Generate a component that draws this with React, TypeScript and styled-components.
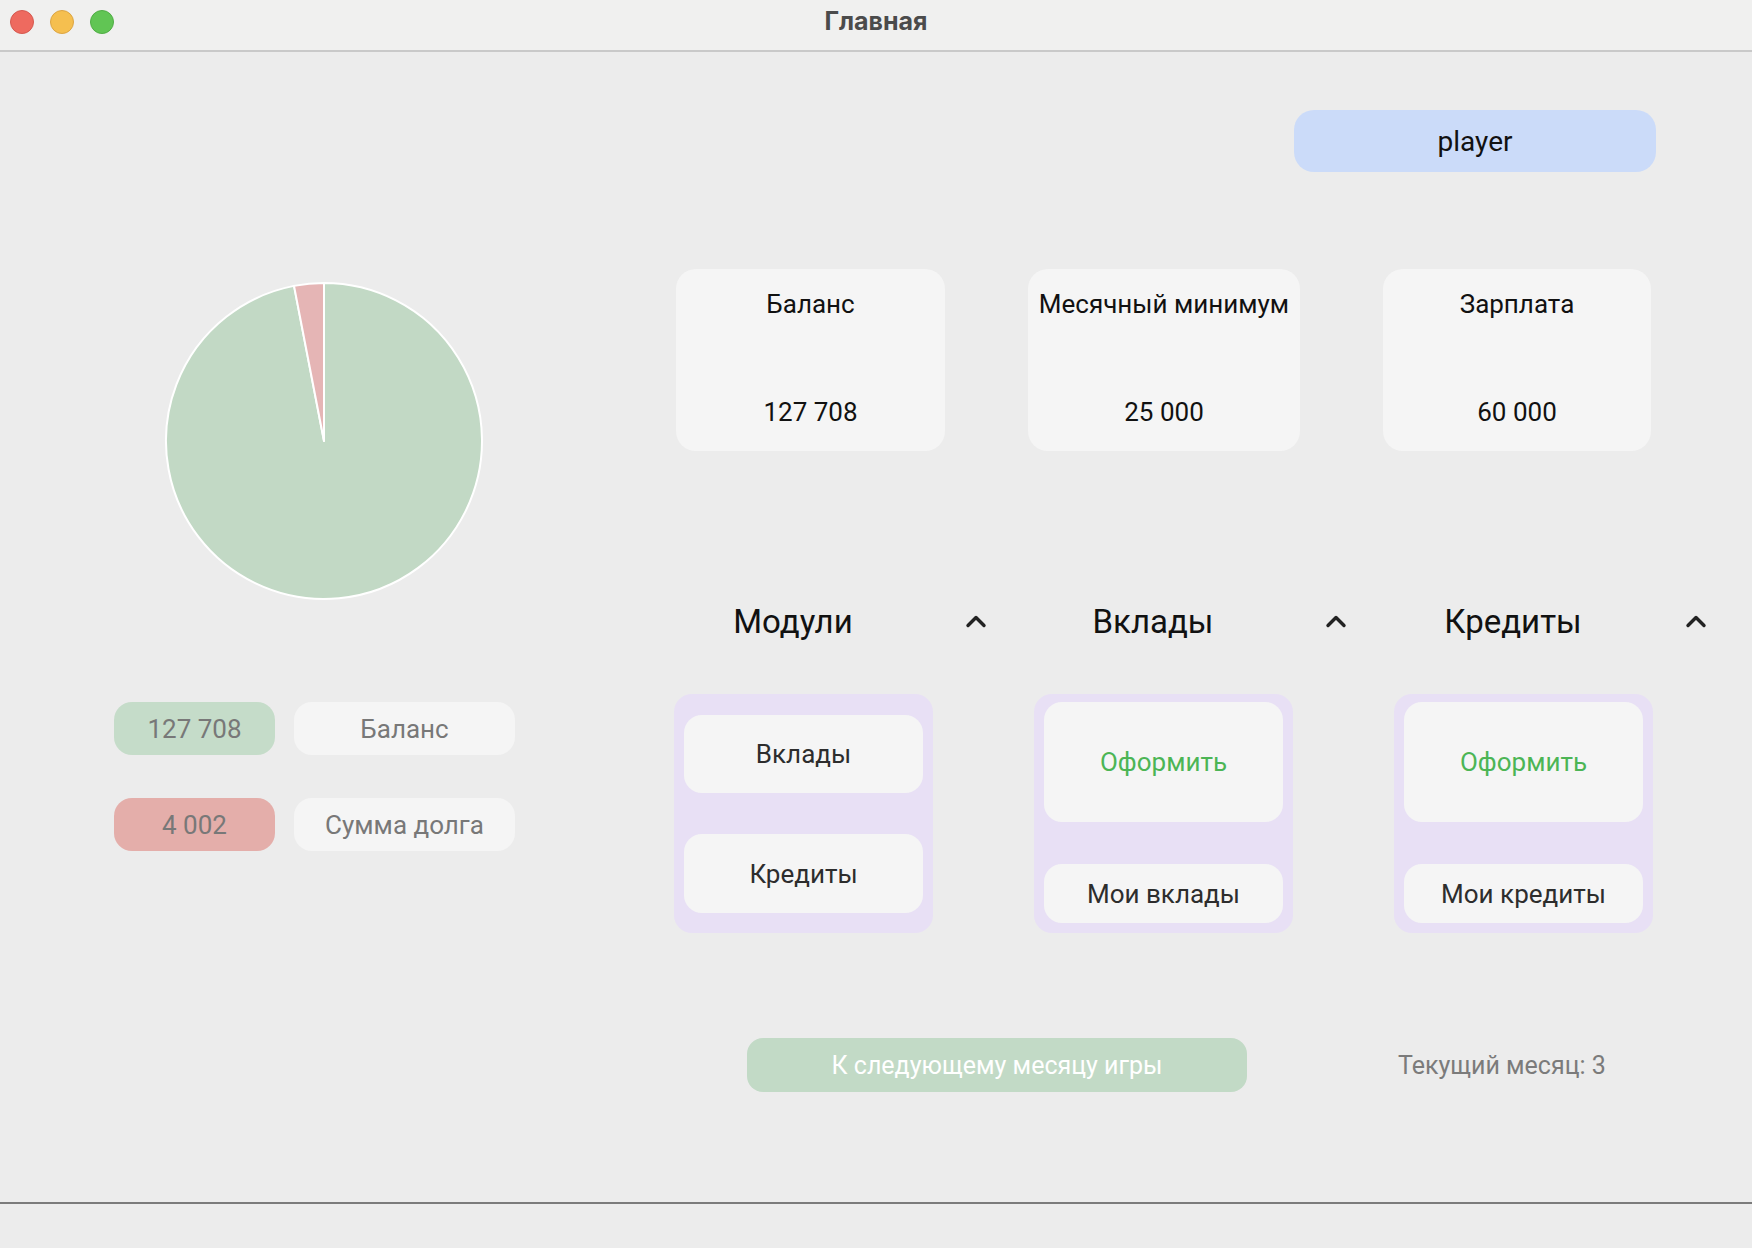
import React from "react";
import styled, { createGlobalStyle } from "styled-components";

const FONT = `"Roboto", "Noto Sans", "DejaVu Sans", sans-serif`;

const GlobalStyle = createGlobalStyle`
  html, body { margin: 0; padding: 0; background: #ececec; }
  body { font-family: ${FONT}; }
  * { box-sizing: border-box; }
`;

const Window = styled.div`
  width: 1752px;
  height: 1248px;
  display: flex;
  flex-direction: column;
  background: #ececec;
  overflow: hidden;
`;

const TitleBar = styled.div`
  height: 52px;
  flex: none;
  display: flex;
  align-items: flex-start;
  position: relative;
  background: #f0f0ef;
  border-bottom: 2px solid #c9c9c9;
  padding: 10px 0 0 10px;
`;

const Lights = styled.div`
  display: flex;
  gap: 16px;
`;

const Light = styled.span<{ $c: string; $b: string }>`
  width: 24px;
  height: 24px;
  border-radius: 50%;
  background: ${(p) => p.$c};
  border: 1px solid ${(p) => p.$b};
`;

const Title = styled.div`
  position: absolute;
  left: 0;
  right: 0;
  top: 0;
  height: 42px;
  display: flex;
  align-items: center;
  justify-content: center;
  font-family: "Inter", "Noto Sans", sans-serif;
  font-weight: 700;
  font-size: 25px;
  color: #4b4b4b;
  pointer-events: none;
`;

const Main = styled.div`
  flex: 1;
  display: flex;
`;

const Footer = styled.div`
  height: 46px;
  flex: none;
  border-top: 2px solid #7b7b7b;
  background: #ececec;
`;

/* ---------- left column ---------- */

const LeftColumn = styled.div`
  width: 674px;
  flex: none;
  display: flex;
  flex-direction: column;
  padding: 229px 0 0 114px;
`;

const PieWrap = styled.div`
  margin-left: 50px;
  width: 320px;
  height: 320px;
  margin-bottom: 101px;
`;

const Legend = styled.div`
  display: flex;
  flex-direction: column;
  gap: 43px;
`;

const LegendRow = styled.div`
  display: flex;
  gap: 19px;
`;

const Pill = styled.div<{ $bg: string; $w: number }>`
  width: ${(p) => p.$w}px;
  height: 53px;
  border-radius: 18px;
  background: ${(p) => p.$bg};
  display: flex;
  align-items: center;
  justify-content: center;
  font-size: 26px;
  color: #787878;
`;

/* ---------- right column ---------- */

const RightColumn = styled.div`
  flex: 1;
  display: flex;
  flex-direction: column;
  padding: 58px 0 0 0;
`;

const PlayerRow = styled.div`
  display: flex;
  justify-content: flex-end;
  padding-right: 96px;
`;

const PlayerButton = styled.div`
  width: 362px;
  height: 62px;
  border-radius: 20px;
  background: #cbdbf9;
  display: flex;
  align-items: center;
  justify-content: center;
  font-size: 28px;
  color: #111;
`;

const Cards = styled.div`
  margin: 97px 0 0 2px;
  display: grid;
  grid-template-columns: 269px 272px 268px;
  column-gap: 83px;
`;

const Card = styled.div`
  height: 182px;
  border-radius: 20px;
  background: #f5f5f5;
  display: flex;
  flex-direction: column;
  align-items: center;
  justify-content: space-between;
  padding: 20px 0 24px;
  color: #111;
  font-size: 26px;
`;

const Sections = styled.div`
  margin-top: 148px;
  display: grid;
  grid-template-columns: repeat(3, 259px);
  column-gap: 101px;
`;

const Section = styled.div`
  display: flex;
  flex-direction: column;
`;

const SectionHeader = styled.div`
  height: 44px;
  display: flex;
  align-items: center;
  margin-bottom: 51px;
  white-space: nowrap;
`;

const SectionTitle = styled.div`
  flex: none;
  width: 238px;
  text-align: center;
  font-size: 33px;
  color: #111;
`;

const Chevron = styled.svg`
  margin-left: 53px;
  flex: none;
`;

const Panel = styled.div<{ $pt: number; $gap: number }>`
  height: 239px;
  border-radius: 18px;
  background: #e8e0f5;
  display: flex;
  flex-direction: column;
  gap: ${(p) => p.$gap}px;
  padding: ${(p) => p.$pt}px 10px 10px;
`;

const PanelButton = styled.div<{ $h: number; $green?: boolean }>`
  height: ${(p) => p.$h}px;
  flex: none;
  border-radius: 18px;
  background: #f5f5f5;
  display: flex;
  align-items: center;
  justify-content: center;
  font-size: 26px;
  color: ${(p) => (p.$green ? "#4cb555" : "#2d2d2d")};
`;

const BottomRow = styled.div`
  margin-top: 105px;
  display: flex;
  align-items: center;
  padding-left: 73px;
  gap: 151px;
`;

const NextButton = styled.div`
  width: 500px;
  height: 54px;
  border-radius: 16px;
  background: #c2dac6;
  display: flex;
  align-items: center;
  justify-content: center;
  color: #ffffff;
  font-size: 25px;
`;

const MonthLabel = styled.div`
  font-size: 25px;
  color: #7b7b7b;
`;

/* ---------- components ---------- */

const balance = 127708;
const debt = 4002;

function PieChart() {
  const cx = 160;
  const cy = 160;
  const r = 158;
  const frac = debt / (balance + debt);
  const ang = frac * 2 * Math.PI;
  const x = cx - r * Math.sin(ang);
  const y = cy - r * Math.cos(ang);
  return (
    <svg width="320" height="320" viewBox="0 0 320 320">
      <path
        d={`M${cx},${cy} L${x},${y} A${r},${r} 0 1 0 ${cx},${cy - r} Z`}
        fill="#c2d9c5"
        stroke="#ffffff"
        strokeWidth="2"
        strokeLinejoin="round"
      />
      <path
        d={`M${cx},${cy} L${cx},${cy - r} A${r},${r} 0 0 0 ${x},${y} Z`}
        fill="#e5b5b5"
        stroke="#ffffff"
        strokeWidth="2"
        strokeLinejoin="round"
      />
    </svg>
  );
}

function ChevronUp() {
  return (
    <Chevron width="22" height="14" viewBox="0 0 22 14">
      <polyline
        points="3,11.5 11,3.5 19,11.5"
        fill="none"
        stroke="#222"
        strokeWidth="3.4"
        strokeLinecap="round"
        strokeLinejoin="round"
      />
    </Chevron>
  );
}

const fmt = (n: number) => n.toLocaleString("ru-RU").replace(/\u00a0|\u202f/g, " ");

const cards = [
  { title: "Баланс", value: fmt(balance) },
  { title: "Месячный минимум", value: "25 000" },
  { title: "Зарплата", value: "60 000" },
];

export default function App() {
  return (
    <>
      <GlobalStyle />
      <Window>
        <TitleBar>
          <Lights>
            <Light $c="#ee6a5f" $b="#d5594f" />
            <Light $c="#f5bf4f" $b="#dca543" />
            <Light $c="#61c554" $b="#50ad45" />
          </Lights>
          <Title>Главная</Title>
        </TitleBar>
        <Main>
          <LeftColumn>
            <PieWrap>
              <PieChart />
            </PieWrap>
            <Legend>
              <LegendRow>
                <Pill $bg="#c5dcc9" $w={161}>{fmt(balance)}</Pill>
                <Pill $bg="#f5f5f5" $w={221}>Баланс</Pill>
              </LegendRow>
              <LegendRow>
                <Pill $bg="#e4aeaa" $w={161}>{fmt(debt)}</Pill>
                <Pill $bg="#f5f5f5" $w={221}>Сумма долга</Pill>
              </LegendRow>
            </Legend>
          </LeftColumn>
          <RightColumn>
            <PlayerRow>
              <PlayerButton>player</PlayerButton>
            </PlayerRow>
            <Cards>
              {cards.map((c) => (
                <Card key={c.title}>
                  <div>{c.title}</div>
                  <div>{c.value}</div>
                </Card>
              ))}
            </Cards>
            <Sections>
              <Section>
                <SectionHeader>
                  <SectionTitle>Модули</SectionTitle>
                  <ChevronUp />
                </SectionHeader>
                <Panel $pt={21} $gap={41}>
                  <PanelButton $h={78}>Вклады</PanelButton>
                  <PanelButton $h={79}>Кредиты</PanelButton>
                </Panel>
              </Section>
              <Section>
                <SectionHeader>
                  <SectionTitle>Вклады</SectionTitle>
                  <ChevronUp />
                </SectionHeader>
                <Panel $pt={8} $gap={42}>
                  <PanelButton $h={120} $green>Оформить</PanelButton>
                  <PanelButton $h={59}>Мои вклады</PanelButton>
                </Panel>
              </Section>
              <Section>
                <SectionHeader>
                  <SectionTitle>Кредиты</SectionTitle>
                  <ChevronUp />
                </SectionHeader>
                <Panel $pt={8} $gap={42}>
                  <PanelButton $h={120} $green>Оформить</PanelButton>
                  <PanelButton $h={59}>Мои кредиты</PanelButton>
                </Panel>
              </Section>
            </Sections>
            <BottomRow>
              <NextButton>К следующему месяцу игры</NextButton>
              <MonthLabel>Текущий месяц: 3</MonthLabel>
            </BottomRow>
          </RightColumn>
        </Main>
        <Footer />
      </Window>
    </>
  );
}
